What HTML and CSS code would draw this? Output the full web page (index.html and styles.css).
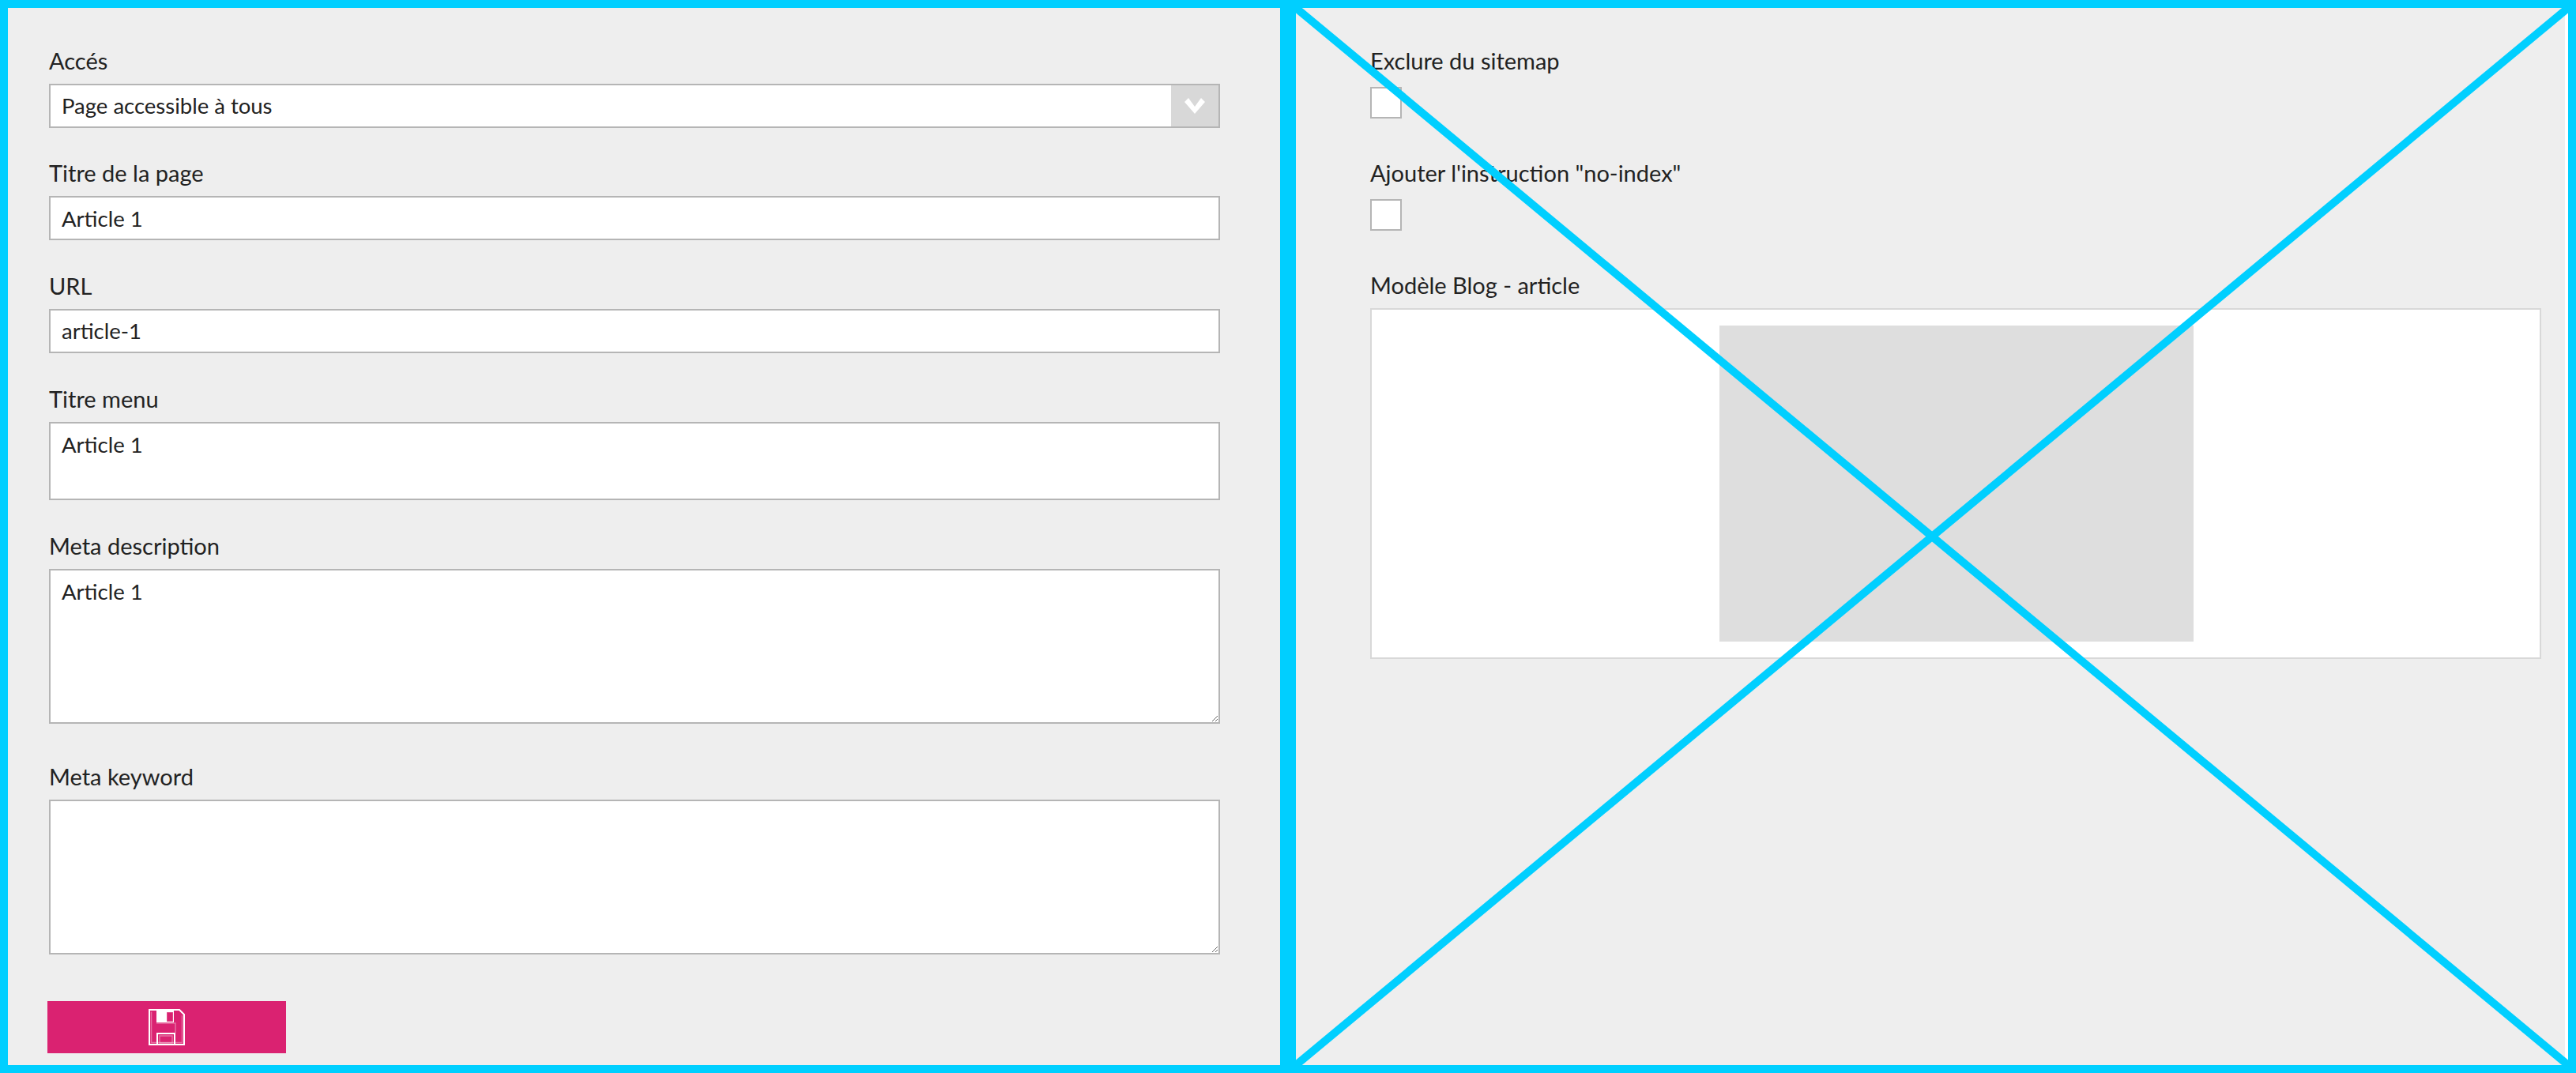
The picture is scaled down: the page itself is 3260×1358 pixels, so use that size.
FILE: index.html
```html
<!DOCTYPE html>
<html lang="fr">
<head>
    <meta charset="UTF-8">
    <title>Edition de la page</title>
    <link rel="stylesheet" href="styles.css">
</head>
<body>
    <div class="screen">
        <form class="panel panel-left">
            <div class="field">
                <label>Accés</label>
                <div class="select-box">
                    <select class="select-input">
                        <option>Page accessible à tous</option>
                    </select>
                    <span class="select-arrow">
                        <svg width="26" height="21" viewBox="0 0 26 21"><polygon points="0,6 5,1 13,12 21,1 26,6 13,21" fill="#fff"/></svg>
                    </span>
                </div>
            </div>
            <div class="field">
                <label>Titre de la page</label>
                <input class="text-input" type="text" value="Article 1">
            </div>
            <div class="field">
                <label>URL</label>
                <input class="text-input" type="text" value="article-1">
            </div>
            <div class="field">
                <label>Titre menu</label>
                <textarea class="text-area text-area-small">Article 1</textarea>
            </div>
            <div class="field field-big">
                <label>Meta description</label>
                <textarea class="text-area text-area-big">Article 1</textarea>
            </div>
            <div class="field field-big">
                <label>Meta keyword</label>
                <textarea class="text-area text-area-big"></textarea>
            </div>
            <button class="save-button" type="button">
                <svg width="46" height="46" viewBox="0 0 46 46" fill="none">
                    <path d="M1 1H39L45 7V45H1Z" stroke="#fff" stroke-width="2"/>
                    <path d="M3.5 3.5V42.5H42.5V8" stroke="#fff" stroke-opacity=".35" stroke-width="1.5"/>
                    <rect x="10" y="2" width="22" height="15" fill="#fff"/>
                    <rect x="23" y="4" width="8" height="12" fill="#da2271" stroke="#fff" stroke-opacity=".35"/>
                    <path d="M10 18H34V30" stroke="#fff" stroke-opacity=".35" stroke-width="1.5"/>
                    <path d="M11 45V31H33V45" stroke="#fff" stroke-width="2"/>
                    <rect x="14" y="34" width="16" height="9" stroke="#fff" stroke-opacity=".35" stroke-width="1.5"/>
                </svg>
            </button>
        </form>
        <div class="panel panel-right">
            <div class="field field-check">
                <label>Exclure du sitemap</label>
                <input class="check-input" type="checkbox">
            </div>
            <div class="field field-check">
                <label>Ajouter l'instruction "no-index"</label>
                <input class="check-input" type="checkbox">
            </div>
            <div class="field">
                <label>Modèle Blog - article</label>
                <div class="template-box">
                    <div class="template-thumb"></div>
                </div>
            </div>
            <svg class="cross" width="1630" height="1358" viewBox="0 0 1630 1358">
                <line x1="0" y1="0" x2="1610" y2="1338"/>
                <line x1="0" y1="1338" x2="1610" y2="0"/>
            </svg>
        </div>
    </div>
</body>
</html>
```

FILE: styles.css
```css
* {
    box-sizing: border-box;
}
html, body {
    margin: 0;
    padding: 0;
}
body {
    font-family: Lato, sans-serif;
    font-size: 29px;
    color: #222;
    background-color: #00cfff;
}
.screen {
    display: grid;
    grid-template-columns: 1630px 1630px;
    width: 3260px;
    height: 1358px;
}
.panel {
    border: 10px solid #00cfff;
    background-color: #eee;
    height: 1358px;
    overflow: hidden;
}
.panel-left {
    padding: 45.8px 76px 0 52px;
}
.panel-right {
    position: relative;
    padding: 45.8px 0 0 94px;
    box-shadow: inset -4px 0 0 #fff;
}
.field {
    margin-bottom: 36.6px;
}
.field-big {
    margin-bottom: 46.3px;
}
.field label {
    display: block;
    height: 42px;
    line-height: 42px;
    margin-bottom: 8px;
}
.field-check {
    margin-bottom: 48px;
}
.field-check label {
    margin-bottom: 12px;
}
.select-box {
    display: flex;
    height: 56px;
    border: 2px solid #b5b5b5;
    background-color: #fff;
}
.select-input {
    flex: 1;
    appearance: none;
    border: none;
    outline: none;
    background: none;
    padding: 0 14px;
    font: inherit;
    font-size: 27.5px;
    color: inherit;
}
.select-arrow {
    display: flex;
    align-items: center;
    justify-content: center;
    width: 60px;
    background-color: #d8d8d8;
}
.text-input, .text-area {
    display: block;
    width: 100%;
    border: 2px solid #b5b5b5;
    border-radius: 0;
    outline: none;
    background-color: #fff;
    padding: 0 14px;
    font: inherit;
    font-size: 27.5px;
    color: inherit;
}
.text-input {
    height: 56px;
}
.text-area {
    padding-top: 10px;
}
.text-area-small {
    height: 99.5px;
    resize: none;
}
.text-area-big {
    height: 196px;
}
.check-input {
    display: block;
    appearance: none;
    width: 40px;
    height: 40px;
    margin: 0;
    border: 2px solid #b5b5b5;
    background-color: #fff;
}
.template-box {
    display: flex;
    justify-content: center;
    width: 1482px;
    margin-top: 2.2px;
    padding: 20px 20px 20px 22px;
    border: 2px solid #d8d8d8;
    background-color: #fff;
}
.template-thumb {
    width: 600px;
    height: 400px;
    background-color: #dedede;
}
.save-button {
    display: flex;
    align-items: center;
    justify-content: center;
    width: 302px;
    height: 66px;
    margin: 59.5px 0 0 -2px;
    padding: 0;
    border: none;
    background-color: #da2271;
}
.cross {
    position: absolute;
    left: 0;
    top: 0;
}
.cross line {
    stroke: #00cfff;
    stroke-width: 10;
}
```
